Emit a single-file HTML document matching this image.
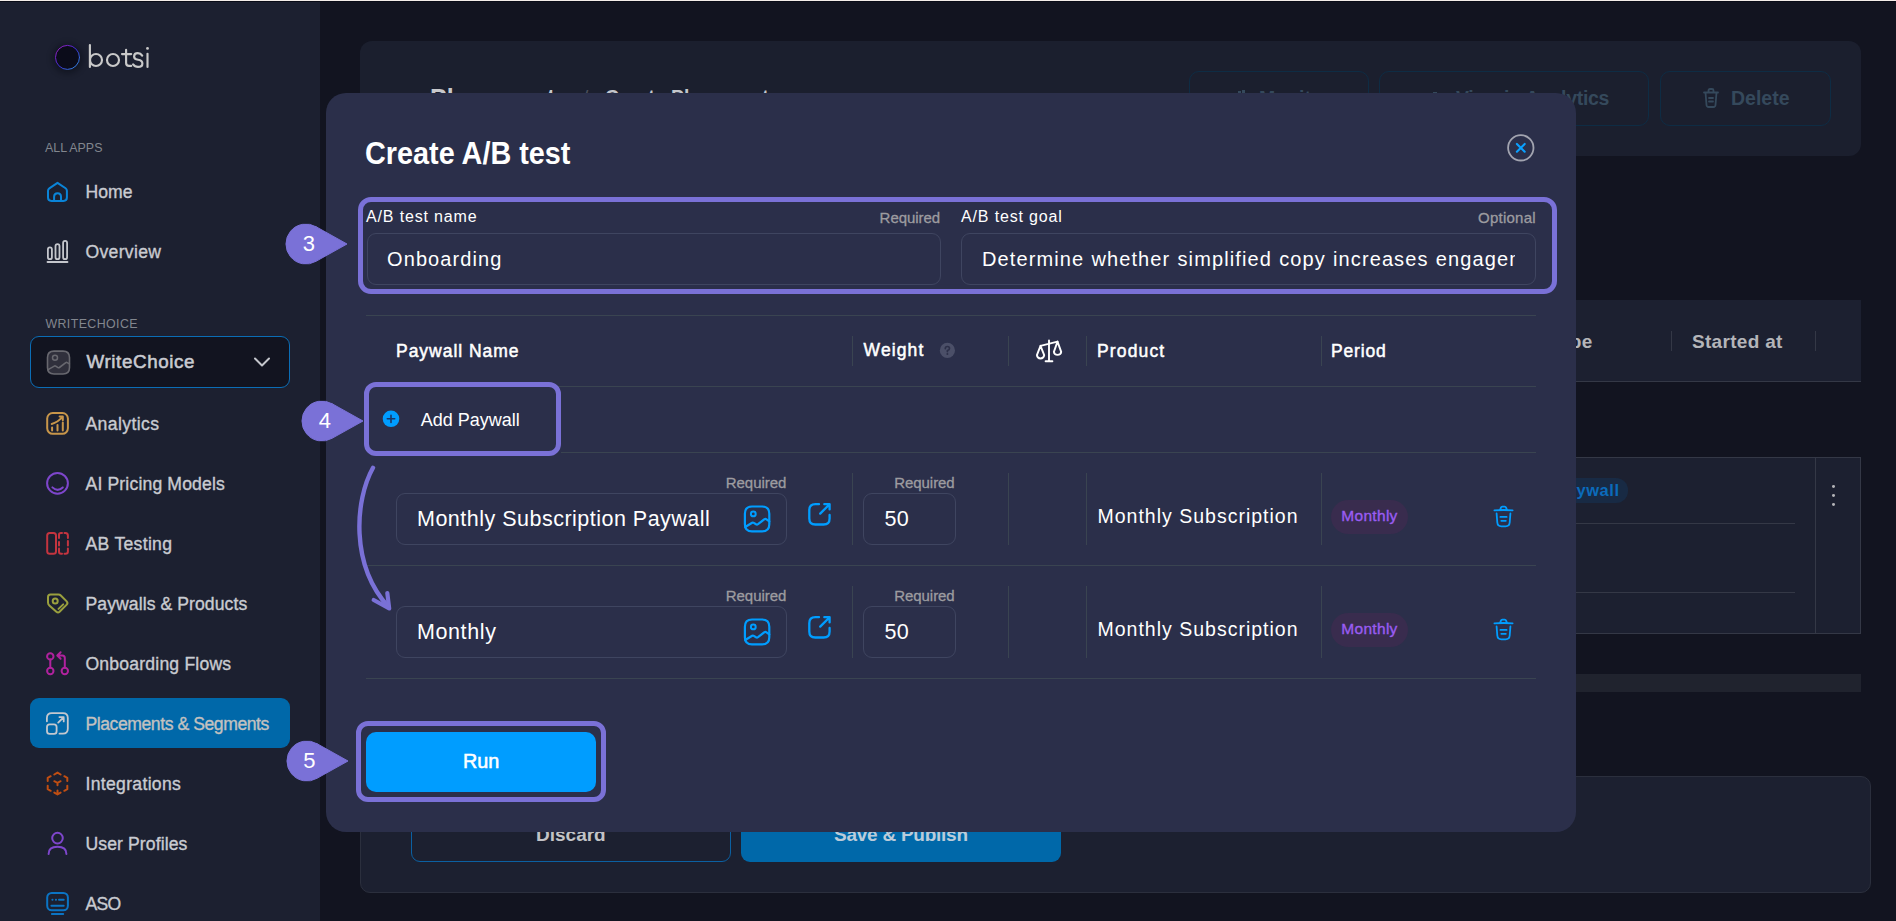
<!DOCTYPE html><html><head><meta charset="utf-8"><style>
html,body{margin:0;padding:0;width:1896px;height:921px;overflow:hidden;background:#121420;}
body{position:relative;font-family:"Liberation Sans",sans-serif;}
.t{position:absolute;white-space:nowrap;line-height:1;}
.r{position:absolute;box-sizing:border-box;}
</style></head><body>
<div class="r" style="left:0px;top:0px;width:1896px;height:1px;background:#f4ede9;"></div>
<div class="r" style="left:0px;top:1px;width:1896px;height:1px;background:#0a0c17;"></div>
<div class="r" style="left:0px;top:2px;width:320px;height:919px;background:#1c2030;"></div>
<div class="r" style="left:55px;top:45px;width:25px;height:25px;border-radius:50%;box-shadow:0 1px 6px 2px rgba(5,6,14,0.45);"></div>
<svg class="r" style="left:50px;top:40px;" width="35" height="35" viewBox="50 40 35 35" fill="none" stroke-linecap="round" stroke-linejoin="round"><defs><linearGradient id="lg" x1="0" y1="0" x2="1" y2="1"><stop offset="0" stop-color="#b01cc0"/><stop offset="0.5" stop-color="#3a2bd0"/><stop offset="1" stop-color="#2f9ae0"/></linearGradient></defs><circle cx="67.5" cy="57.4" r="12" fill="#0b0c1a" stroke="url(#lg)" stroke-width="1"/></svg>
<svg class="r" style="left:85px;top:42px;" width="66" height="28" viewBox="85 42 66 28" fill="none" stroke-linecap="round" stroke-linejoin="round"><g stroke="#c9c9c9" stroke-width="2.15" fill="none"><path d="M89.9 45 V66.9"/><circle cx="96" cy="60" r="6"/><circle cx="113" cy="60" r="6"/><path d="M126.1 49.8 V63 Q126.1 65.9 129 65.9 H131.2 M122 54.1 H131.2"/><path d="M142.2 55.6 Q140.6 53.1 137.8 53.1 Q134.1 53.1 134.1 56.4 Q134.1 59.1 138 59.7 Q142.4 60.4 142.4 63.4 Q142.4 66.9 138 66.9 Q134.8 66.9 133.1 64.4"/><path d="M147.5 53.7 V67"/></g><circle cx="147.5" cy="48.4" r="1.4" fill="#c9c9c9"/></svg>
<div class="t" style="left:45px;top:141.50px;font-size:12.4px;color:#82868e;font-weight:400;letter-spacing:0px;">ALL APPS</div>
<div class="t" style="left:45.4px;top:317.50px;font-size:12.4px;color:#82868e;font-weight:400;letter-spacing:0.4px;">WRITECHOICE</div>
<div class="r" style="left:30px;top:336px;width:260px;height:52px;background:#121420;border:1px solid #0b6db5;border-radius:9px;"></div>
<svg class="r" style="left:44px;top:348px;" width="30" height="30" viewBox="44 348 30 30" fill="none" stroke-linecap="round" stroke-linejoin="round"><path d="M54 351.1 H63 Q69.5 351.1 69.5 357.6 V367.5 Q69.5 374 63 374 H54 Q47.5 374 47.5 367.5 V357.6 Q47.5 351.1 54 351.1 Z" fill="#30303c" stroke="#68686f" stroke-width="1.6"/><circle cx="55" cy="357.8" r="2.5" stroke="#68686f" stroke-width="1.5"/><path d="M48.1 369.6 L54.3 366.1 Q55 365.7 55.7 366.1 L58 367.6 Q58.7 368 59.4 367.5 L65.8 362.7 Q66.5 362.2 67.2 362.6 L69.4 363.9" stroke="#68686f" stroke-width="1.6" stroke-linecap="round" stroke-linejoin="round"/></svg>
<div class="t" style="left:86.5px;top:352.69px;font-size:18.8px;color:#c9cbd1;font-weight:400;letter-spacing:0.6px;-webkit-text-stroke:0.55px #c9cbd1;">WriteChoice</div>
<svg class="r" style="left:252px;top:355px;" width="20" height="14" viewBox="0 0 20 14" fill="none" stroke-linecap="round" stroke-linejoin="round"><path d="M3 3.5 L10 10.5 L17 3.5" stroke="#c4c6cc" stroke-width="2"/></svg>
<div class="r" style="left:30px;top:698px;width:260px;height:50px;background:#0068a9;border-radius:9px;"></div>
<div class="t" style="left:85.5px;top:183.60px;font-size:17.6px;color:#c9cbd1;font-weight:400;letter-spacing:0.0px;-webkit-text-stroke:0.35px #c9cbd1;">Home</div>
<svg class="r" style="left:40px;top:170px;" width="36" height="751" viewBox="40 170 36 751" fill="none" stroke="#0a84d8" stroke-width="2" stroke-linecap="round" stroke-linejoin="round"><path d="M57.5 182.8 L49.3 188.3 Q48 189.2 48 190.8 V197.5 Q48 200.9 51.4 200.9 H63.5 Q66.9 200.9 66.9 197.5 V190.8 Q66.9 189.2 65.6 188.3 Z"/><path d="M54.1 200.9 V196.8 Q54.1 193.3 57.5 193.3 Q61 193.3 61 196.8 V200.9"/></svg>
<div class="t" style="left:85.5px;top:243.60px;font-size:17.6px;color:#c9cbd1;font-weight:400;letter-spacing:0.312px;-webkit-text-stroke:0.35px #c9cbd1;">Overview</div>
<svg class="r" style="left:40px;top:170px;" width="36" height="751" viewBox="40 170 36 751" fill="none" stroke="#c4c6cc" stroke-width="1.8" stroke-linecap="round" stroke-linejoin="round"><rect x="47.9" y="247.3" width="4" height="11.9" rx="2"/><rect x="55.5" y="244.2" width="4" height="15" rx="2"/><rect x="63.1" y="240.9" width="4" height="18.3" rx="2"/><path d="M47.5 262 H67.5"/></svg>
<div class="t" style="left:85.5px;top:415.90px;font-size:17.6px;color:#c9cbd1;font-weight:400;letter-spacing:0.389px;-webkit-text-stroke:0.35px #c9cbd1;">Analytics</div>
<svg class="r" style="left:40px;top:170px;" width="36" height="751" viewBox="40 170 36 751" fill="none" stroke="#c8964a" stroke-width="2" stroke-linecap="round" stroke-linejoin="round"><rect x="47.2" y="413" width="20.7" height="20.8" rx="5.5"/><path d="M52.1 427.5 V430.5 M57.5 425 V430.5 M62.8 422.6 V430.5"/><path d="M51.7 424 Q57.5 422.5 62.3 417.2 M59.6 416.6 H62.8 V420.3"/></svg>
<div class="t" style="left:85.5px;top:475.90px;font-size:17.6px;color:#c9cbd1;font-weight:400;letter-spacing:0.153px;-webkit-text-stroke:0.35px #c9cbd1;">AI Pricing Models</div>
<svg class="r" style="left:40px;top:170px;" width="36" height="751" viewBox="40 170 36 751" fill="none" stroke="#7e46cc" stroke-width="2" stroke-linecap="round" stroke-linejoin="round"><circle cx="57.5" cy="483.3" r="10.4"/><path d="M52.4 487.4 Q57.5 492.3 62.8 487.4"/></svg>
<div class="t" style="left:85.5px;top:535.90px;font-size:17.6px;color:#c9cbd1;font-weight:400;letter-spacing:0.3px;-webkit-text-stroke:0.35px #c9cbd1;">AB Testing</div>
<svg class="r" style="left:40px;top:170px;" width="36" height="751" viewBox="40 170 36 751" fill="none" stroke="#c4343f" stroke-width="2" stroke-linecap="round" stroke-linejoin="round"><rect x="47.2" y="533" width="8.8" height="20.8" rx="2.5"/><path d="M59 538 V534.5 Q59 533 61 533 H62 M64.5 533 H65.5 Q67.9 533 67.9 535.5 V538 M67.9 541 V545.5 M67.9 548.5 V551.5 Q67.9 553.8 65.5 553.8 H64.5 M62 553.8 H61 Q59 553.8 59 551.5 V548.5 M59 542 V545.5"/></svg>
<div class="t" style="left:85.5px;top:595.90px;font-size:17.6px;color:#c9cbd1;font-weight:400;letter-spacing:0.074px;-webkit-text-stroke:0.35px #c9cbd1;">Paywalls &amp; Products</div>
<svg class="r" style="left:40px;top:170px;" width="36" height="751" viewBox="40 170 36 751" fill="none" stroke="#9aa03e" stroke-width="2" stroke-linecap="round" stroke-linejoin="round"><path d="M50.5 594.5 H58.5 Q59.8 594.5 60.8 595.5 L66.7 601.4 Q68.2 603 66.7 604.6 L59.6 611.8 Q58 613.3 56.4 611.8 L49.3 605.4 Q48 604.3 48 602.6 V597 Q48 594.5 50.5 594.5 Z"/><circle cx="55.2" cy="601.1" r="2.5"/><path d="M58.5 608.9 L63.2 604.4"/></svg>
<div class="t" style="left:85.5px;top:655.90px;font-size:17.6px;color:#c9cbd1;font-weight:400;letter-spacing:0.188px;-webkit-text-stroke:0.35px #c9cbd1;">Onboarding Flows</div>
<svg class="r" style="left:40px;top:170px;" width="36" height="751" viewBox="40 170 36 751" fill="none" stroke="#b0229e" stroke-width="2" stroke-linecap="round" stroke-linejoin="round"><circle cx="50.3" cy="656.4" r="3.2"/><circle cx="50.3" cy="671" r="3.2"/><circle cx="64.8" cy="671" r="3.2"/><path d="M50.3 659.6 V667.8 M64.8 667.8 V658 Q64.8 655.5 62.3 655.5 H57.5 M60.6 652.2 L57.3 655.5 L60.6 658.7"/></svg>
<div class="t" style="left:85.5px;top:715.90px;font-size:17.6px;color:#c3c1c0;font-weight:400;letter-spacing:-0.44px;-webkit-text-stroke:0.35px #c3c1c0;">Placements &amp; Segments</div>
<svg class="r" style="left:40px;top:170px;" width="36" height="751" viewBox="40 170 36 751" fill="none" stroke="#c4c8cf" stroke-width="1.8" stroke-linecap="round" stroke-linejoin="round"><path d="M46.9 721.3 V718 Q46.9 713.1 51.8 713.1 H62.9 Q67.8 713.1 67.8 718 V728.8 Q67.8 733.7 62.9 733.7 H59.5"/><rect x="47" y="724.3" width="9.6" height="9.5" rx="2.6"/><path d="M58.2 722.6 L63.7 717.1 M59.4 717.1 H63.7 V721.4"/></svg>
<div class="t" style="left:85.5px;top:775.90px;font-size:17.6px;color:#c9cbd1;font-weight:400;letter-spacing:0.308px;-webkit-text-stroke:0.35px #c9cbd1;">Integrations</div>
<svg class="r" style="left:40px;top:170px;" width="36" height="751" viewBox="40 170 36 751" fill="none" stroke="#c04e12" stroke-width="2" stroke-linecap="round" stroke-linejoin="round"><path d="M54.3 774.5 L57.5 772.6 L60.6 774.5 M50.7 776.2 L47.7 777.9 V780.9 M64.3 776.2 L67.3 777.9 V780.9 M47.7 785.8 V789.2 L50.7 790.8 M67.3 785.8 V789.2 L64.3 790.8 M54.3 792.6 L57.5 794.4 L60.6 792.6 M57.5 790.6 V794.4 M54.3 781.2 L57.5 782.8 L60.6 781.2 M57.5 782.8 V785.3"/></svg>
<div class="t" style="left:85.5px;top:835.90px;font-size:17.6px;color:#c9cbd1;font-weight:400;letter-spacing:0.1px;-webkit-text-stroke:0.35px #c9cbd1;">User Profiles</div>
<svg class="r" style="left:40px;top:170px;" width="36" height="751" viewBox="40 170 36 751" fill="none" stroke="#7e46cc" stroke-width="2" stroke-linecap="round" stroke-linejoin="round"><circle cx="57.5" cy="838.1" r="5.3"/><path d="M48.6 853.9 Q48.6 846.8 57.5 846.8 Q66.4 846.8 66.4 853.9"/></svg>
<div class="t" style="left:85.5px;top:895.90px;font-size:17.6px;color:#c9cbd1;font-weight:400;letter-spacing:-0.7px;-webkit-text-stroke:0.35px #c9cbd1;">ASO</div>
<svg class="r" style="left:40px;top:170px;" width="36" height="751" viewBox="40 170 36 751" fill="none" stroke="#0b74c4" stroke-width="2" stroke-linecap="round" stroke-linejoin="round"><rect x="47.2" y="893" width="20.7" height="17.3" rx="4.5"/><path d="M52.4 899.7 H52.5 M55.9 899.7 H56 M59 899.7 H63.7 M51.4 905.8 H63.7 M51.9 913.9 H63.2"/></svg>
<div class="r" style="left:360px;top:41px;width:1501px;height:115px;background:#1b1f2e;border-radius:12px;"></div>
<div class="t" style="left:430px;top:85.74px;font-size:25px;color:#c8c8cc;font-weight:700;letter-spacing:0px;">Placements</div>
<div class="t" style="left:582.5px;top:87.22px;font-size:21px;color:#4a4e5a;font-weight:400;letter-spacing:0px;">/</div>
<div class="t" style="left:605px;top:87.69px;font-size:19.5px;color:#c4c6cc;font-weight:700;letter-spacing:0px;">Create Placement</div>
<div class="r" style="left:1188.5px;top:71px;width:180.5px;height:55px;border:1px solid #0e2c44;border-radius:10px;"></div>
<div class="r" style="left:1379px;top:71px;width:270px;height:55px;border:1px solid #0e2c44;border-radius:10px;"></div>
<div class="r" style="left:1660px;top:71px;width:171px;height:55px;border:1px solid #0e2c44;border-radius:10px;"></div>
<div class="t" style="left:1259px;top:89.29px;font-size:19.5px;color:#35495c;font-weight:700;letter-spacing:0px;">Monitor</div>
<div class="t" style="left:1456px;top:89.29px;font-size:19.5px;color:#35495c;font-weight:700;letter-spacing:-0.3px;">View in Analytics</div>
<div class="r" style="left:1238px;top:90.5px;width:2.5px;height:3.5px;background:#35495c;"></div>
<div class="r" style="left:1242px;top:89.8px;width:2.5px;height:4.200000000000003px;background:#35495c;"></div>
<div class="r" style="left:1433px;top:91.5px;width:4px;height:2.5px;background:#35495c;"></div>
<div class="t" style="left:1731px;top:88.99px;font-size:19.5px;color:#35495c;font-weight:700;letter-spacing:0px;">Delete</div>
<svg class="r" style="left:1701px;top:87px;" width="20" height="22" viewBox="0 0 20 22" fill="none" stroke-linecap="round" stroke-linejoin="round"><path d="M3 5.5 H17 M7.5 5.5 V3.5 Q7.5 2 9 2 H11 Q12.5 2 12.5 3.5 V5.5 M4.5 5.5 L5.5 18 Q5.7 20 7.5 20 H12.5 Q14.3 20 14.5 18 L15.5 5.5 M8 11 H12 M8 14.5 H12" stroke="#35495c" stroke-width="1.8"/></svg>
<div class="r" style="left:1000px;top:300px;width:861px;height:82px;background:#1c2030;border-bottom:1px solid #343846;"></div>
<div class="t" style="left:1548.5px;top:331.62px;font-size:19px;color:#b4b5b9;font-weight:700;letter-spacing:0.3px;">Type</div>
<div class="r" style="left:1671px;top:331px;width:1px;height:20px;background:#343846;"></div>
<div class="r" style="left:1815px;top:331px;width:1px;height:20px;background:#343846;"></div>
<div class="t" style="left:1692px;top:331.62px;font-size:19px;color:#b4b5b9;font-weight:700;letter-spacing:0.3px;">Started at</div>
<div class="r" style="left:1000px;top:457px;width:861px;height:177px;background:#1c2030;border:1px solid #343846;"></div>
<div class="r" style="left:1815px;top:457px;width:1px;height:177px;background:#343846;"></div>
<div class="r" style="left:1500px;top:478px;width:128px;height:24.5px;background:#182a44;border-radius:12px;"></div>
<div class="t" style="left:1555px;top:482.03px;font-size:16.5px;color:#0b6bbb;font-weight:700;letter-spacing:0.6px;">Paywall</div>
<div class="r" style="left:1000px;top:523px;width:795px;height:1px;background:#343846;"></div>
<div class="r" style="left:1000px;top:592px;width:795px;height:1px;background:#343846;"></div>
<div class="r" style="left:1831.5px;top:484.5px;width:3.5px;height:3.3999999999999773px;background:#b4b4b8;border-radius:50%;"></div>
<div class="r" style="left:1831.5px;top:493.6px;width:3.5px;height:3.3999999999999773px;background:#b4b4b8;border-radius:50%;"></div>
<div class="r" style="left:1831.5px;top:502.90000000000003px;width:3.5px;height:3.3999999999999773px;background:#b4b4b8;border-radius:50%;"></div>
<div class="r" style="left:1000px;top:674px;width:861px;height:18px;background:#20232e;"></div>
<div class="r" style="left:360px;top:776px;width:1511px;height:117px;background:#1c2030;border:1px solid #2b2f3d;border-radius:10px;"></div>
<div class="r" style="left:411px;top:805px;width:320px;height:57px;border:1px solid #0b60a2;border-radius:9px;"></div>
<div class="r" style="left:741px;top:805px;width:320px;height:57px;background:#0068a9;border-radius:9px;"></div>
<div class="t" style="left:536px;top:824.92px;font-size:19px;color:#c2c3c7;font-weight:700;letter-spacing:0px;">Discard</div>
<div class="t" style="left:834px;top:824.92px;font-size:19px;color:#bccbd9;font-weight:700;letter-spacing:-0.25px;">Save &amp; Publish</div>
<div class="r" style="left:326px;top:93px;width:1250px;height:739px;background:#2b2f4a;border-radius:20px;"></div>
<div class="t" style="left:364.5px;top:137.11px;font-size:32px;color:#ffffff;font-weight:700;letter-spacing:0px;transform:scaleX(0.9);transform-origin:0 0;">Create A/B test</div>
<svg class="r" style="left:1500px;top:128px;" width="42" height="42" viewBox="1500 128 42 42" fill="none" stroke-linecap="round" stroke-linejoin="round"><circle cx="1520.8" cy="147.8" r="12.7" stroke="#a2a4b0" stroke-width="1.8"/><path d="M1516.9 143.9 L1524.7 151.7 M1524.7 143.9 L1516.9 151.7" stroke="#0aa0ff" stroke-width="2.1"/></svg>
<div class="r" style="left:358px;top:197px;width:1199px;height:97px;border:5px solid #7a71d7;border-radius:13px;"></div>
<div class="t" style="left:366px;top:208.86px;font-size:16px;color:#ffffff;font-weight:400;letter-spacing:0.85px;">A/B test name</div>
<div class="t" style="left:879.6px;top:210.10px;font-size:15px;color:#9d9ca0;font-weight:400;letter-spacing:-0.05px;-webkit-text-stroke:0.3px #9d9ca0;">Required</div>
<div class="r" style="left:366.5px;top:233px;width:574.5px;height:52px;border:1px solid #3f4560;border-radius:9px;"></div>
<div class="t" style="left:387px;top:248.67px;font-size:20px;color:#ffffff;font-weight:400;letter-spacing:1.1px;">Onboarding</div>
<div class="t" style="left:961px;top:209.26px;font-size:16px;color:#ffffff;font-weight:400;letter-spacing:0.85px;">A/B test goal</div>
<div class="t" style="left:1478px;top:210.10px;font-size:15px;color:#9d9ca0;font-weight:400;letter-spacing:0.25px;-webkit-text-stroke:0.3px #9d9ca0;">Optional</div>
<div class="r" style="left:961px;top:233px;width:575px;height:52px;border:1px solid #3f4560;border-radius:9px;"></div>
<div class="r" style="left:982px;top:240px;width:533px;height:40px;overflow:hidden;"><div class="t" style="left:0px;top:9.07px;font-size:20px;color:#ffffff;font-weight:400;letter-spacing:1.1px;word-spacing:0.6px;">Determine whether simplified copy increases engagement</div>
</div>
<div class="r" style="left:366px;top:315px;width:1170px;height:1px;background:#3a4451;"></div>
<div class="t" style="left:396px;top:342.69px;font-size:17.5px;color:#ffffff;font-weight:400;letter-spacing:0.97px;-webkit-text-stroke:0.5px #fff;">Paywall Name</div>
<div class="r" style="left:852px;top:336px;width:1px;height:30px;background:#3a4451;"></div>
<div class="r" style="left:1008px;top:336px;width:1px;height:30px;background:#3a4451;"></div>
<div class="r" style="left:1086px;top:336px;width:1px;height:30px;background:#3a4451;"></div>
<div class="r" style="left:1320.5px;top:336px;width:1.0px;height:30px;background:#3a4451;"></div>
<div class="t" style="left:863.6px;top:342.49px;font-size:17.5px;color:#ffffff;font-weight:400;letter-spacing:1.1px;-webkit-text-stroke:0.5px #fff;">Weight</div>
<svg class="r" style="left:938px;top:341px;" width="20" height="20" viewBox="938 341 20 20" fill="none" stroke-linecap="round" stroke-linejoin="round"><circle cx="947.4" cy="350.4" r="7.6" fill="#4b4f68"/><path d="M945.3 348.6 Q945.3 346.5 947.4 346.5 Q949.5 346.5 949.5 348.4 Q949.5 349.7 947.4 350.5 V351.6" stroke="#2c2f48" stroke-width="1.7" stroke-linecap="round"/><circle cx="947.4" cy="354" r="1" fill="#2c2f48"/></svg>
<svg class="r" style="left:1030px;top:336px;" width="36" height="30" viewBox="1030 336 36 30" fill="none" stroke-linecap="round" stroke-linejoin="round"><path d="M1049 340.5 V361.2 M1045.6 361.3 H1052.4 M1040.5 345.8 L1057.5 341.6" stroke="#ffffff" stroke-width="1.9"/><path d="M1040.5 345.8 L1036.9 355.2 Q1037.3 358.5 1040.5 358.5 Q1043.8 358.5 1044.2 355.2 Z M1057.5 341.6 L1053.9 351.9 Q1054.3 354.9 1057.5 354.9 Q1060.8 354.9 1061.2 351.9 Z" stroke="#ffffff" stroke-width="1.9"/></svg>
<div class="t" style="left:1097px;top:342.69px;font-size:17.5px;color:#ffffff;font-weight:400;letter-spacing:1.15px;-webkit-text-stroke:0.5px #fff;">Product</div>
<div class="t" style="left:1331px;top:342.69px;font-size:17.5px;color:#ffffff;font-weight:400;letter-spacing:0.82px;-webkit-text-stroke:0.5px #fff;">Period</div>
<div class="r" style="left:366px;top:386px;width:1170px;height:1px;background:#3a4451;"></div>
<div class="r" style="left:364px;top:382px;width:197px;height:74px;border:5px solid #7a71d7;border-radius:12px;"></div>
<svg class="r" style="left:380px;top:408px;" width="22" height="22" viewBox="380 408 22 22" fill="none" stroke-linecap="round" stroke-linejoin="round"><circle cx="391" cy="418.8" r="8.3" fill="#009dff"/><path d="M391 415.2 V422.5 M387.3 418.8 H394.7" stroke="#1b3766" stroke-width="1.6" stroke-linecap="round"/></svg>
<div class="t" style="left:420.7px;top:410.86px;font-size:18px;color:#ffffff;font-weight:400;letter-spacing:0px;">Add Paywall</div>
<div class="r" style="left:561px;top:452px;width:975px;height:1px;background:#3a4451;"></div>
<div class="t" style="left:725.8px;top:475.10px;font-size:15px;color:#9d9ca0;font-weight:400;letter-spacing:-0.05px;-webkit-text-stroke:0.3px #9d9ca0;">Required</div>
<div class="r" style="left:396px;top:493px;width:391px;height:52px;border:1px solid #3f4560;border-radius:9px;"></div>
<div class="t" style="left:417px;top:509.00px;font-size:21.5px;color:#ffffff;font-weight:400;letter-spacing:0.49px;">Monthly Subscription Paywall</div>
<svg class="r" style="left:740px;top:502px;" width="34" height="34" viewBox="740 502 34 34" fill="none" stroke-linecap="round" stroke-linejoin="round"><path d="M752 506.5 H762 Q769.3 506.5 769.3 513.8 V524.2 Q769.3 531.4 762 531.4 H752 Q744.9 531.4 744.9 524.2 V513.8 Q744.9 506.5 752 506.5 Z" stroke="#009dff" stroke-width="2.2"/><circle cx="753.3" cy="513.9" r="2.4" stroke="#009dff" stroke-width="2"/><path d="M745.2 527 L752.2 522.8 Q753 522.4 753.8 522.9 L756 524.3 Q757 524.9 758 524.2 L764.5 519.2 Q765.5 518.6 766.5 519.3 L769.3 521.3" stroke="#009dff" stroke-width="2.2"/></svg>
<svg class="r" style="left:805px;top:500px;" width="30" height="30" viewBox="805 500 30 30" fill="none" stroke-linecap="round" stroke-linejoin="round"><path d="M819 504.2 H815.3 Q809.3 504.2 809.3 510.2 V518.5 Q809.3 524.5 815.3 524.5 H823.6 Q829.6 524.5 829.6 518.5 V515" stroke="#009dff" stroke-width="2.3" stroke-linecap="round"/><path d="M820.2 513.6 L829.6 504.2 M824.3 504.2 H829.6 V509.4" stroke="#009dff" stroke-width="2.3" stroke-linecap="round" stroke-linejoin="round"/></svg>
<div class="r" style="left:852px;top:473px;width:1px;height:72px;background:#3a4451;"></div>
<div class="t" style="left:894.2px;top:475.10px;font-size:15px;color:#9d9ca0;font-weight:400;letter-spacing:-0.05px;-webkit-text-stroke:0.3px #9d9ca0;">Required</div>
<div class="r" style="left:863px;top:493px;width:93px;height:52px;border:1px solid #3f4560;border-radius:9px;"></div>
<div class="t" style="left:884.6px;top:509.00px;font-size:21.5px;color:#ffffff;font-weight:400;letter-spacing:0.2px;">50</div>
<div class="r" style="left:1008px;top:473px;width:1px;height:72px;background:#3a4451;"></div>
<div class="r" style="left:1086px;top:473px;width:1px;height:72px;background:#3a4451;"></div>
<div class="t" style="left:1097.5px;top:506.79px;font-size:19.5px;color:#ffffff;font-weight:400;letter-spacing:1.0px;">Monthly Subscription</div>
<div class="r" style="left:1320.5px;top:473px;width:1.0px;height:72px;background:#3a4451;"></div>
<div class="r" style="left:1331px;top:499.5px;width:77px;height:34.0px;background:#392c4e;border-radius:17px;"></div>
<div class="t" style="left:1341.3px;top:507.88px;font-size:15.5px;color:#9a5cf2;font-weight:400;letter-spacing:0.3px;-webkit-text-stroke:0.35px #9a5cf2;">Monthly</div>
<svg class="r" style="left:1490px;top:502px;" width="28" height="28" viewBox="1490 502 28 28" fill="none" stroke-linecap="round" stroke-linejoin="round"><path d="M1494.4 510.4 Q1503.5 509.6 1512.6 510.4 M1500 510.2 L1500.9 507.6 Q1501.3 506.6 1502.3 506.6 H1504.7 Q1505.7 506.6 1506.1 507.6 L1507.1 510.2 M1496.6 513.5 L1497.3 522.5 Q1497.6 526.3 1501.4 526.3 H1505.6 Q1509.4 526.3 1509.7 522.5 L1510.4 513.5 M1500.4 516.9 H1506.6 M1501.3 520.8 H1505.8" stroke="#009dff" stroke-width="1.8" stroke-linecap="round" stroke-linejoin="round"/></svg>
<div class="r" style="left:366px;top:565px;width:1170px;height:1px;background:#3a4451;"></div>
<div class="t" style="left:725.8px;top:588.10px;font-size:15px;color:#9d9ca0;font-weight:400;letter-spacing:-0.05px;-webkit-text-stroke:0.3px #9d9ca0;">Required</div>
<div class="r" style="left:396px;top:606px;width:391px;height:52px;border:1px solid #3f4560;border-radius:9px;"></div>
<div class="t" style="left:417px;top:622.00px;font-size:21.5px;color:#ffffff;font-weight:400;letter-spacing:0.6px;">Monthly</div>
<svg class="r" style="left:740px;top:615px;" width="34" height="34" viewBox="740 615 34 34" fill="none" stroke-linecap="round" stroke-linejoin="round"><path d="M752 619.5 H762 Q769.3 619.5 769.3 626.8 V637.2 Q769.3 644.4 762 644.4 H752 Q744.9 644.4 744.9 637.2 V626.8 Q744.9 619.5 752 619.5 Z" stroke="#009dff" stroke-width="2.2"/><circle cx="753.3" cy="626.9" r="2.4" stroke="#009dff" stroke-width="2"/><path d="M745.2 640 L752.2 635.8 Q753 635.4 753.8 635.9 L756 637.3 Q757 637.9 758 637.2 L764.5 632.2 Q765.5 631.6 766.5 632.3 L769.3 634.3" stroke="#009dff" stroke-width="2.2"/></svg>
<svg class="r" style="left:805px;top:613px;" width="30" height="30" viewBox="805 613 30 30" fill="none" stroke-linecap="round" stroke-linejoin="round"><path d="M819 617.2 H815.3 Q809.3 617.2 809.3 623.2 V631.5 Q809.3 637.5 815.3 637.5 H823.6 Q829.6 637.5 829.6 631.5 V628" stroke="#009dff" stroke-width="2.3" stroke-linecap="round"/><path d="M820.2 626.6 L829.6 617.2 M824.3 617.2 H829.6 V622.4" stroke="#009dff" stroke-width="2.3" stroke-linecap="round" stroke-linejoin="round"/></svg>
<div class="r" style="left:852px;top:586px;width:1px;height:72px;background:#3a4451;"></div>
<div class="t" style="left:894.2px;top:588.10px;font-size:15px;color:#9d9ca0;font-weight:400;letter-spacing:-0.05px;-webkit-text-stroke:0.3px #9d9ca0;">Required</div>
<div class="r" style="left:863px;top:606px;width:93px;height:52px;border:1px solid #3f4560;border-radius:9px;"></div>
<div class="t" style="left:884.6px;top:622.00px;font-size:21.5px;color:#ffffff;font-weight:400;letter-spacing:0.2px;">50</div>
<div class="r" style="left:1008px;top:586px;width:1px;height:72px;background:#3a4451;"></div>
<div class="r" style="left:1086px;top:586px;width:1px;height:72px;background:#3a4451;"></div>
<div class="t" style="left:1097.5px;top:619.79px;font-size:19.5px;color:#ffffff;font-weight:400;letter-spacing:1.0px;">Monthly Subscription</div>
<div class="r" style="left:1320.5px;top:586px;width:1.0px;height:72px;background:#3a4451;"></div>
<div class="r" style="left:1331px;top:612.5px;width:77px;height:34.0px;background:#392c4e;border-radius:17px;"></div>
<div class="t" style="left:1341.3px;top:620.88px;font-size:15.5px;color:#9a5cf2;font-weight:400;letter-spacing:0.3px;-webkit-text-stroke:0.35px #9a5cf2;">Monthly</div>
<svg class="r" style="left:1490px;top:615px;" width="28" height="28" viewBox="1490 615 28 28" fill="none" stroke-linecap="round" stroke-linejoin="round"><path d="M1494.4 623.4 Q1503.5 622.6 1512.6 623.4 M1500 623.2 L1500.9 620.6 Q1501.3 619.6 1502.3 619.6 H1504.7 Q1505.7 619.6 1506.1 620.6 L1507.1 623.2 M1496.6 626.5 L1497.3 635.5 Q1497.6 639.3 1501.4 639.3 H1505.6 Q1509.4 639.3 1509.7 635.5 L1510.4 626.5 M1500.4 629.9 H1506.6 M1501.3 633.8 H1505.8" stroke="#009dff" stroke-width="1.8" stroke-linecap="round" stroke-linejoin="round"/></svg>
<div class="r" style="left:366px;top:678px;width:1170px;height:1px;background:#3a4451;"></div>
<svg class="r" style="left:340px;top:450px;" width="80" height="180" viewBox="340 450 80 180" fill="none" stroke-linecap="round" stroke-linejoin="round"><path d="M373 467.8 C355 500 350 565 388.5 607" stroke="#7a71d7" stroke-width="4.4"/><path d="M373.7 600 L389.2 608.4 L387.3 593" stroke="#7a71d7" stroke-width="4.2"/></svg>
<div class="r" style="left:356px;top:721px;width:250px;height:81px;border:5px solid #7a71d7;border-radius:12px;"></div>
<div class="r" style="left:366px;top:732px;width:230px;height:60px;background:#009dff;border-radius:10px;"></div>
<div class="t" style="left:462.9px;top:752.24px;font-size:19.8px;color:#ffffff;font-weight:400;letter-spacing:0px;-webkit-text-stroke:0.55px #fff;">Run</div>
<svg class="r" style="left:284px;top:222px;" width="70" height="44" viewBox="284 222 70 44" fill="none" stroke-linecap="round" stroke-linejoin="round"><path d="M316.0 226.7 L347.0 244 L316.0 261.3 A20 20 0 1 1 316.0 226.7 Z" fill="#7a71d7" stroke="#7a71d7" stroke-width="1" stroke-linejoin="round"/></svg>
<div class="t" style="left:302.7px;top:233.38px;font-size:22px;color:#ffffff;font-weight:400;letter-spacing:0px;">3</div>
<svg class="r" style="left:300px;top:399px;" width="70" height="44" viewBox="300 399 70 44" fill="none" stroke-linecap="round" stroke-linejoin="round"><path d="M332.0 403.7 L363.0 421 L332.0 438.3 A20 20 0 1 1 332.0 403.7 Z" fill="#7a71d7" stroke="#7a71d7" stroke-width="1" stroke-linejoin="round"/></svg>
<div class="t" style="left:318.7px;top:410.38px;font-size:22px;color:#ffffff;font-weight:400;letter-spacing:0px;">4</div>
<svg class="r" style="left:284.5px;top:739px;" width="70" height="44" viewBox="284.5 739 70 44" fill="none" stroke-linecap="round" stroke-linejoin="round"><path d="M316.5 743.7 L347.5 761 L316.5 778.3 A20 20 0 1 1 316.5 743.7 Z" fill="#7a71d7" stroke="#7a71d7" stroke-width="1" stroke-linejoin="round"/></svg>
<div class="t" style="left:303.2px;top:750.38px;font-size:22px;color:#ffffff;font-weight:400;letter-spacing:0px;">5</div>
</body></html>
